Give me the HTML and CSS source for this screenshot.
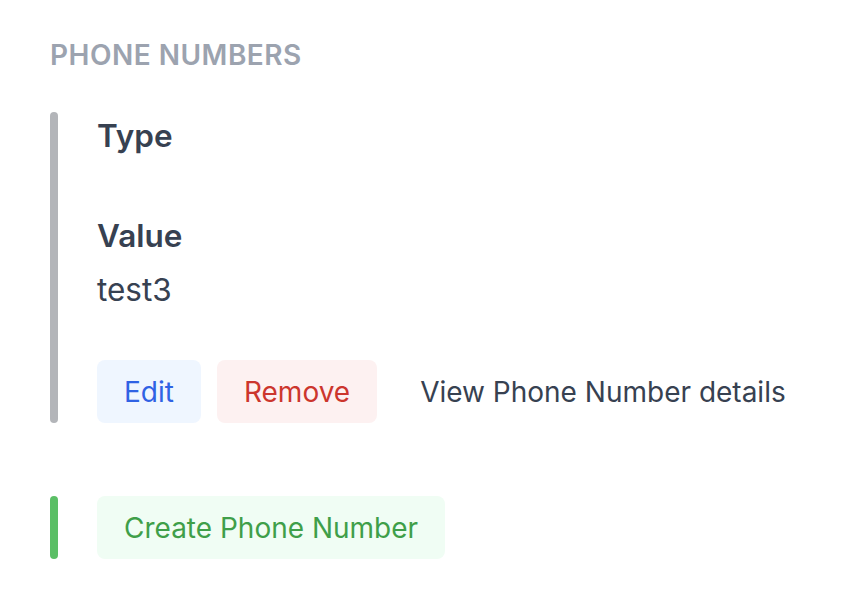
FILE: index.html
```html
<!DOCTYPE html>
<html>
<head>
<meta charset="utf-8">
<link rel="stylesheet" href="styles.css">
</head>
<body>
<div class="page">
  <h2 class="section-title">Phone Numbers</h2>
  <div class="entry">
    <div class="field">
      <div class="label">Type</div>
      <div class="value"></div>
    </div>
    <div class="field">
      <div class="label">Value</div>
      <div class="value">test3</div>
    </div>
    <div class="actions">
      <button class="btn btn-edit">Edit</button>
      <button class="btn btn-remove">Remove</button>
      <button class="btn btn-plain">View Phone Number details</button>
    </div>
  </div>
  <div class="create">
    <button class="btn btn-create">Create Phone Number</button>
  </div>
</div>
</body>
</html>
```
FILE: styles.css
```css
* { box-sizing: border-box; }
html, body { margin: 0; padding: 0; background: #ffffff; }
body {
  font-family: Inter, "Noto Sans", "Liberation Sans", sans-serif;
  font-size: 28px;
  line-height: 42px;
  color: #374151;
}
.page {
  padding: 34px 0 0 50px;
}
.section-title {
  margin: 0 0 36px 0;
  font-size: 28px;
  line-height: 42px;
  font-weight: 600;
  letter-spacing: 0.5px;
  text-transform: uppercase;
  color: #9ca3af;
}
.entry {
  position: relative;
  padding: 0 0 0 47px;
}
.entry::before,
.create::before {
  content: "";
  position: absolute;
  left: 0;
  top: 0;
  bottom: 0;
  width: 8px;
  border-radius: 4px;
  background: #b3b5b9;
}
.create::before { background: #5bbf66; }
.field {
  display: flex;
  flex-direction: column;
  margin-bottom: 46px;
  font-size: 31.5px;
  line-height: 48px;
}
.label {
  font-weight: 600;
  color: #374151;
}
.value {
  margin-top: 6px;
  color: #374151;
}
.value:empty { height: 0; }
.actions {
  display: flex;
  gap: 16px;
}
.btn {
  font-family: inherit;
  font-size: 28px;
  line-height: 43px;
  padding: 11px 27px 9px;
  border: 0;
  border-radius: 8px;
  background: transparent;
  color: #374151;
}
.btn-edit { background: #eff6ff; color: #2f62e4; }
.btn-remove { background: #fdf1f1; color: #cc362d; }
.btn-create { background: #f0fdf4; color: #3f9f49; }
.create {
  position: relative;
  margin-top: 73px;
  padding-left: 47px;
  display: flex;
}
```
